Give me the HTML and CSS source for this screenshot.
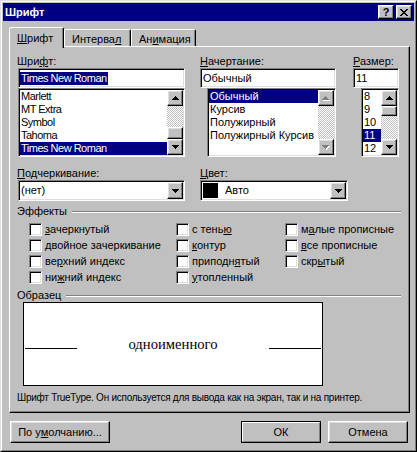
FILE: index.html
```html
<!DOCTYPE html>
<html lang="ru">
<head>
<meta charset="utf-8">
<title>Шрифт</title>
<link rel="stylesheet" href="styles.css">
</head>
<body>
<div class="window">
  <div class="frame">
    <div class="titlebar">
      <span class="title">Шрифт</span>
      <div class="tbtns">
        <span class="tbtn help">?</span>
        <span class="tbtn"><svg class="px" width="8" height="7" viewBox="0 0 8 7"><path d="M0 0h2v1H0zM6 0h2v1H6zM1 1h2v1H1zM5 1h2v1H5zM2 2h4v1H2zM3 3h2v1H3zM2 4h4v1H2zM1 5h2v1H1zM5 5h2v1H5zM0 6h2v1H0zM6 6h2v1H6z"/></svg></span>
      </div>
    </div>

    <div class="tabs">
      <div class="tab active w-font"><u>Ш</u>рифт</div>
      <div class="tab w-int">Интерва<u>л</u></div>
      <div class="tab w-anim">Ан<u>и</u>мация</div>
    </div>

    <div class="panel">
      <div class="row1">
        <div class="col c-font">
          <div class="label">Шри<u>ф</u>т:</div>
          <div class="field sunken lat"><span class="selected-text">Times New Roman</span></div>
          <div class="list sunken l-font lat">
            <div class="items">
              <div class="item">Marlett</div>
              <div class="item">MT Extra</div>
              <div class="item">Symbol</div>
              <div class="item">Tahoma</div>
              <div class="item sel">Times New Roman</div>
            </div>
            <div class="vscroll">
              <div class="sbtn raised"><svg class="px" width="7" height="4" viewBox="0 0 7 4"><path d="M3 0h1v1H3zM2 1h3v1H2zM1 2h5v1H1zM0 3h7v1H0z"/></svg></div>
              <div class="track"><div class="thumb raised thumb-end"></div></div>
              <div class="sbtn raised"><svg class="px" width="7" height="4" viewBox="0 0 7 4"><path d="M0 0h7v1H0zM1 1h5v1H1zM2 2h3v1H2zM3 3h1v1H3z"/></svg></div>
            </div>
          </div>
        </div>

        <div class="col c-style">
          <div class="label"><u>Н</u>ачертание:</div>
          <div class="field sunken">Обычный</div>
          <div class="list sunken l-style">
            <div class="items">
              <div class="item sel">Обычный</div>
              <div class="item">Курсив</div>
              <div class="item">Полужирный</div>
              <div class="item">Полужирный Курсив</div>
            </div>
            <div class="vscroll">
              <div class="sbtn raised"><svg class="px" width="8" height="5" viewBox="0 0 8 5"><path class="hl" d="M4 1h1v1H4zM3 2h3v1H3zM2 3h5v1H2zM1 4h7v1H1z"/><path class="dis" d="M3 0h1v1H3zM2 1h3v1H2zM1 2h5v1H1zM0 3h7v1H0z"/></svg></div>
              <div class="track"></div>
              <div class="sbtn raised"><svg class="px" width="8" height="5" viewBox="0 0 8 5"><path class="hl" d="M1 1h7v1H1zM2 2h5v1H2zM3 3h3v1H3zM4 4h1v1H4z"/><path class="dis" d="M0 0h7v1H0zM1 1h5v1H1zM2 2h3v1H2zM3 3h1v1H3z"/></svg></div>
            </div>
          </div>
        </div>

        <div class="col c-size">
          <div class="label"><u>Р</u>азмер:</div>
          <div class="field sunken">11</div>
          <div class="list sunken l-size">
            <div class="items">
              <div class="item">8</div>
              <div class="item">9</div>
              <div class="item">10</div>
              <div class="item sel">11</div>
              <div class="item">12</div>
            </div>
            <div class="vscroll">
              <div class="sbtn raised"><svg class="px" width="7" height="4" viewBox="0 0 7 4"><path d="M3 0h1v1H3zM2 1h3v1H2zM1 2h5v1H1zM0 3h7v1H0z"/></svg></div>
              <div class="track"><div class="thumb raised"></div></div>
              <div class="sbtn raised"><svg class="px" width="7" height="4" viewBox="0 0 7 4"><path d="M0 0h7v1H0zM1 1h5v1H1zM2 2h3v1H2zM3 3h1v1H3z"/></svg></div>
            </div>
          </div>
        </div>
      </div>

      <div class="row2">
        <div class="col c-under">
          <div class="label"><u>П</u>одчеркивание:</div>
          <div class="combo sunken">
            <span class="combo-text">(нет)</span>
            <span class="dbtn raised"><svg class="px" width="7" height="4" viewBox="0 0 7 4"><path d="M0 0h7v1H0zM1 1h5v1H1zM2 2h3v1H2zM3 3h1v1H3z"/></svg></span>
          </div>
        </div>
        <div class="col c-color">
          <div class="label"><u>Ц</u>вет:</div>
          <div class="combo sunken">
            <span class="swatch"></span>
            <span class="combo-text">Авто</span>
            <span class="dbtn raised"><svg class="px" width="7" height="4" viewBox="0 0 7 4"><path d="M0 0h7v1H0zM1 1h5v1H1zM2 2h3v1H2zM3 3h1v1H3z"/></svg></span>
          </div>
        </div>
      </div>

      <div class="legend legend-effects"><span>Эффекты</span><span class="etch"></span></div>
      <div class="effects">
        <div class="cb-row"><span class="cb sunken"></span><span><u>з</u>ачеркнутый</span></div>
        <div class="cb-row"><span class="cb sunken"></span><span>с тень<u>ю</u></span></div>
        <div class="cb-row"><span class="cb sunken"></span><span>м<u>а</u>лые прописные</span></div>
        <div class="cb-row"><span class="cb sunken"></span><span><u>д</u>войное зачеркивание</span></div>
        <div class="cb-row"><span class="cb sunken"></span><span><u>к</u>онтур</span></div>
        <div class="cb-row"><span class="cb sunken"></span><span><u>в</u>се прописные</span></div>
        <div class="cb-row"><span class="cb sunken"></span><span>ве<u>р</u>хний индекс</span></div>
        <div class="cb-row"><span class="cb sunken"></span><span>приподн<u>я</u>тый</span></div>
        <div class="cb-row"><span class="cb sunken"></span><span>скр<u>ы</u>тый</span></div>
        <div class="cb-row"><span class="cb sunken"></span><span>ни<u>ж</u>ний индекс</span></div>
        <div class="cb-row"><span class="cb sunken"></span><span><u>у</u>топленный</span></div>
      </div>

      <div class="legend legend-sample"><span>Образец</span><span class="etch"></span></div>
      <div class="sample">
        <div class="sample-row">
          <span class="sline"></span>
          <span class="sample-text">одноименного</span>
          <span class="sline"></span>
        </div>
      </div>
      <div class="note">Шрифт TrueType. Он используется для вывода как на экран, так и на принтер.</div>
    </div>

    <div class="buttons">
      <div class="btn raised b-default">По у<u>м</u>олчанию...</div>
      <div class="btn-group">
        <div class="btn-def"><div class="btn raised b-ok">ОК</div></div>
        <div class="btn raised b-cancel">Отмена</div>
      </div>
    </div>
  </div>
</div>
</body>
</html>
```

FILE: styles.css
```css
* { box-sizing: border-box; margin: 0; padding: 0; }
html, body { width: 417px; height: 452px; overflow: hidden; }
body {
  background: #c0c0c0;
  font-family: "Liberation Sans", Arial, sans-serif;
  font-size: 11px;
  line-height: 13px;
  letter-spacing: 0;
  color: #000;
}
u { text-decoration: underline; text-underline-offset: 1px; }
svg.px { display: block; shape-rendering: crispEdges; fill: #000; }
.lat { letter-spacing: -0.5px; }

.window {
  width: 417px; height: 452px;
  border: 1px solid; border-color: #dfdfdf #000 #000 #dfdfdf;
}
.frame {
  height: 100%;
  border: 1px solid; border-color: #fff #808080 #808080 #fff;
  padding: 1px;
  display: flex; flex-direction: column;
}

/* 3D helpers */
.sunken {
  border: 1px solid; border-color: #808080 #fff #fff #808080;
  box-shadow: inset 1px 1px #000, inset -1px -1px #dfdfdf;
  background: #fff;
  padding: 1px;
}
.raised {
  border: 1px solid; border-color: #fff #000 #000 #fff;
  box-shadow: inset -1px -1px #808080, inset 1px 1px #dfdfdf;
  background: #c0c0c0;
}

/* title bar */
.titlebar {
  flex: none; height: 18px;
  background: #000080; color: #fff;
  display: flex; align-items: center; justify-content: space-between;
  padding: 0 2px 0 2px;
}
.title { font-weight: bold; }
.tbtns { display: flex; gap: 2px; }
.tbtn {
  width: 16px; height: 14px;
  background: #c0c0c0; color: #000;
  border: 1px solid; border-color: #fff #000 #000 #fff;
  box-shadow: inset -1px -1px #808080, inset 1px 1px #dfdfdf;
  display: flex; align-items: center; justify-content: center;
}
.tbtn.help { font-weight: bold; line-height: 11px; padding-top: 1px; }

/* tabs */
.tabs { flex: none; display: flex; align-items: flex-end; height: 19px; margin: 6px 0 0 6px; }
.tab {
  height: 17px;
  padding: 3px 0 0 7px;
  border: 1px solid; border-bottom: none;
  border-color: #fff #000 transparent #fff;
  box-shadow: inset -1px 0 #808080;
  border-radius: 2px 2px 0 0;
  white-space: nowrap;
}
.tab.active {
  height: 21px; margin-bottom: -2px;
  padding-top: 4px;
  position: relative; z-index: 1;
  background: #c0c0c0;
}
.w-font { width: 55px; }
.w-int { width: 67px; }
.w-anim { width: 65px; }

/* panel */
.panel {
  flex: none;
  height: 367px;
  margin: 0 4px 0 6px;
  border: 1px solid; border-color: #fff #000 #000 #fff;
  box-shadow: inset -1px -1px #808080;
  padding: 8px 8px 0 7px;
}
.row1, .row2 { display: flex; }
.row2 { margin-top: 10px; }
.label { height: 13px; white-space: nowrap; }
.c-font { width: 168px; }
.c-font .field, .c-font .list { margin-left: 1px; }
.c-style { width: 136px; margin-left: 15px; }
.c-size { width: 46px; margin-left: 17px; }
.c-under { width: 168px; }
.c-under .combo { margin-left: 1px; }
.c-color { width: 148px; margin-left: 15px; }

.field {
  height: 20px;
  display: flex; align-items: center;
  padding: 1px 2px;
  white-space: nowrap;
}
.selected-text { background: #000080; color: #fff; padding: 0 1px 0 1px; margin-left: -1px; }

.list { height: 69px; display: flex; }
.l-font { margin-left: 7px; }
.l-style { margin-left: 7px; }
.l-size { margin-left: 8px; }
.items { flex: 1; min-width: 0; }
.item { height: 13px; padding-left: 1px; white-space: nowrap; overflow: hidden; }
.item.sel { background: #000080; color: #fff; }

.vscroll { width: 16px; flex: none; display: flex; flex-direction: column; }
.sbtn { flex: none; width: 16px; height: 16px; display: flex; align-items: center; justify-content: center; }
.track {
  flex: 1;
  display: flex; flex-direction: column;
  background: repeating-conic-gradient(#c0c0c0 0 25%, #fff 0 50%) 0 0 / 2px 2px;
}
.thumb { flex: none; height: 10px; }
.thumb-end { margin-top: auto; height: 12px; }
.dis { fill: #808080; }
.hl { fill: #fff; }

/* combos */
.combo { height: 21px; display: flex; align-items: center; padding: 1px; }
.combo-text { flex: 1; padding-left: 1px; white-space: nowrap; }
.dbtn {
  flex: none; width: 16px; height: 17px;
  display: flex; align-items: center; justify-content: center;
}
.swatch { width: 15px; height: 15px; background: #000; margin: 0 6px 0 1px; flex: none; }

/* group headers */
.legend { display: flex; align-items: center; height: 13px; white-space: nowrap; }
.legend-effects { margin-top: 4px; }
.legend-sample { margin-top: 4px; }
.etch {
  flex: 1; height: 2px;
  border-top: 1px solid #808080; border-bottom: 1px solid #fff;
  margin: 0 0 0 5px;
}

/* checkboxes */
.effects {
  margin: 3px 0 0 12px;
  display: grid;
  grid-template-columns: 147px 109px 1fr;
  grid-auto-rows: 16px;
}
.cb-row { display: flex; align-items: center; white-space: nowrap; }
.cb { width: 13px; height: 13px; flex: none; margin-right: 3px; padding: 0; }

/* sample */
.sample {
  margin: 0 0 0 6px;
  width: 300px; height: 84px;
  background: #fff; border: 1px solid #000;
  display: flex; align-items: center;
  padding: 0 1px;
}
.sample-row { flex: 1; display: flex; align-items: baseline; justify-content: space-between; }
.sample-text {
  font-family: "Liberation Serif", "Times New Roman", serif;
  font-size: 14.67px; line-height: 17px;
}
.sline { width: 52px; height: 1px; background: #000; }
.note { margin-top: 5px; white-space: nowrap; font-size: 10px; letter-spacing: -0.25px; }

/* buttons */
.buttons {
  flex: none; height: 22px; margin-top: 8px;
  display: flex; justify-content: space-between;
  padding: 0 6px 0 7px;
}
.btn {
  height: 22px;
  display: flex; align-items: center; justify-content: center;
  white-space: nowrap;
}
.b-default { width: 100px; }
.btn-group { display: flex; gap: 7px; }
.btn-def { border: 1px solid #000; width: 80px; height: 22px; }
.b-ok { height: 20px; width: 78px; border-color: #fff #808080 #808080 #fff; box-shadow: none; }
.b-cancel { width: 80px; }
```
